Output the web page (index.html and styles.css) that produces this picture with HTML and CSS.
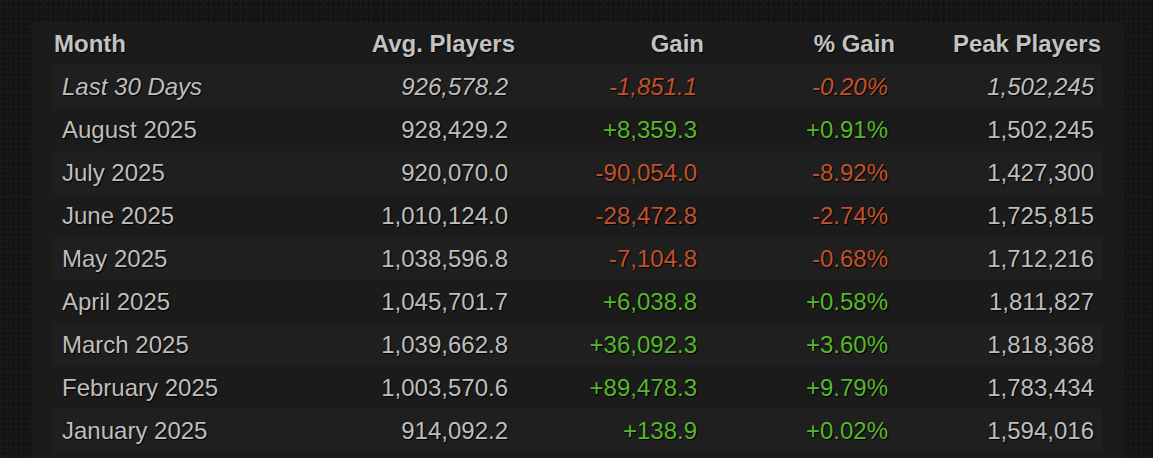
FILE: index.html
```html
<!DOCTYPE html>
<html>
<head>
<meta charset="utf-8">
<link rel="stylesheet" href="styles.css">
</head>
<body>
<div class="panel">
<table class="stats">
<colgroup>
<col class="c1"><col class="c2"><col class="c3"><col class="c4"><col class="c5">
</colgroup>
<thead>
<tr><th class="left">Month</th><th>Avg. Players</th><th>Gain</th><th>% Gain</th><th>Peak Players</th></tr>
</thead>
<tbody>
<tr class="odd recent"><td class="left">Last 30 Days</td><td>926,578.2</td><td class="loss">-1,851.1</td><td class="loss">-0.20%</td><td>1,502,245</td></tr>
<tr><td class="left">August 2025</td><td>928,429.2</td><td class="gain">+8,359.3</td><td class="gain">+0.91%</td><td>1,502,245</td></tr>
<tr class="odd"><td class="left">July 2025</td><td>920,070.0</td><td class="loss">-90,054.0</td><td class="loss">-8.92%</td><td>1,427,300</td></tr>
<tr><td class="left">June 2025</td><td>1,010,124.0</td><td class="loss">-28,472.8</td><td class="loss">-2.74%</td><td>1,725,815</td></tr>
<tr class="odd"><td class="left">May 2025</td><td>1,038,596.8</td><td class="loss">-7,104.8</td><td class="loss">-0.68%</td><td>1,712,216</td></tr>
<tr><td class="left">April 2025</td><td>1,045,701.7</td><td class="gain">+6,038.8</td><td class="gain">+0.58%</td><td>1,811,827</td></tr>
<tr class="odd"><td class="left">March 2025</td><td>1,039,662.8</td><td class="gain">+36,092.3</td><td class="gain">+3.60%</td><td>1,818,368</td></tr>
<tr><td class="left">February 2025</td><td>1,003,570.6</td><td class="gain">+89,478.3</td><td class="gain">+9.79%</td><td>1,783,434</td></tr>
<tr class="odd"><td class="left">January 2025</td><td>914,092.2</td><td class="gain">+138.9</td><td class="gain">+0.02%</td><td>1,594,016</td></tr>
</tbody>
</table>
</div>
</body>
</html>
```
FILE: styles.css
```css
html, body {
  margin: 0;
  padding: 0;
}
html {
  height: 458px;
  overflow: hidden;
}
body {
  background-color: #151515;
  background-image:
    radial-gradient(circle at 20% 30%, rgba(255,255,255,0.025) 0 1px, transparent 2px),
    radial-gradient(circle at 70% 60%, rgba(0,0,0,0.25) 0 1px, transparent 2px);
  background-size: 5px 5px, 7px 7px;
  font-family: "Liberation Sans", Arial, sans-serif;
  color: #bebebe;
  padding-top: 23px;
  height: 435px;
  overflow: hidden;
}
.panel {
  margin-left: 32px;
  width: 1052px;
  padding: 0 20px;
  background: #1b1b1b;
  height: 435px;
  overflow: hidden;
}
.stats {
  width: 1050px;
  border-collapse: collapse;
  table-layout: fixed;
  font-size: 24px;
}
.c1 { width: 250px; }
.c2 { width: 214px; }
.c3 { width: 189px; }
.c4 { width: 191px; }
.c5 { width: 206px; }
.stats th {
  height: 42px;
  padding: 0 1px 0 2px;
  text-align: right;
  font-weight: bold;
  color: #c2c2c2;
  text-shadow: 1px 1px 1px #000;
  vertical-align: middle;
}
.stats td {
  height: 43px;
  padding: 0 8px 0 10px;
  text-align: right;
  vertical-align: middle;
  color: #bebebe;
  text-shadow: 1px 1px 1px #000;
  white-space: nowrap;
}
.stats .left {
  text-align: left;
}
.stats tr.odd td {
  background: #1f1f1f;
}
.stats tr.recent td {
  font-style: italic;
}
.stats td.gain {
  color: #55b72c;
}
.stats td.loss {
  color: #c0522c;
}
```
